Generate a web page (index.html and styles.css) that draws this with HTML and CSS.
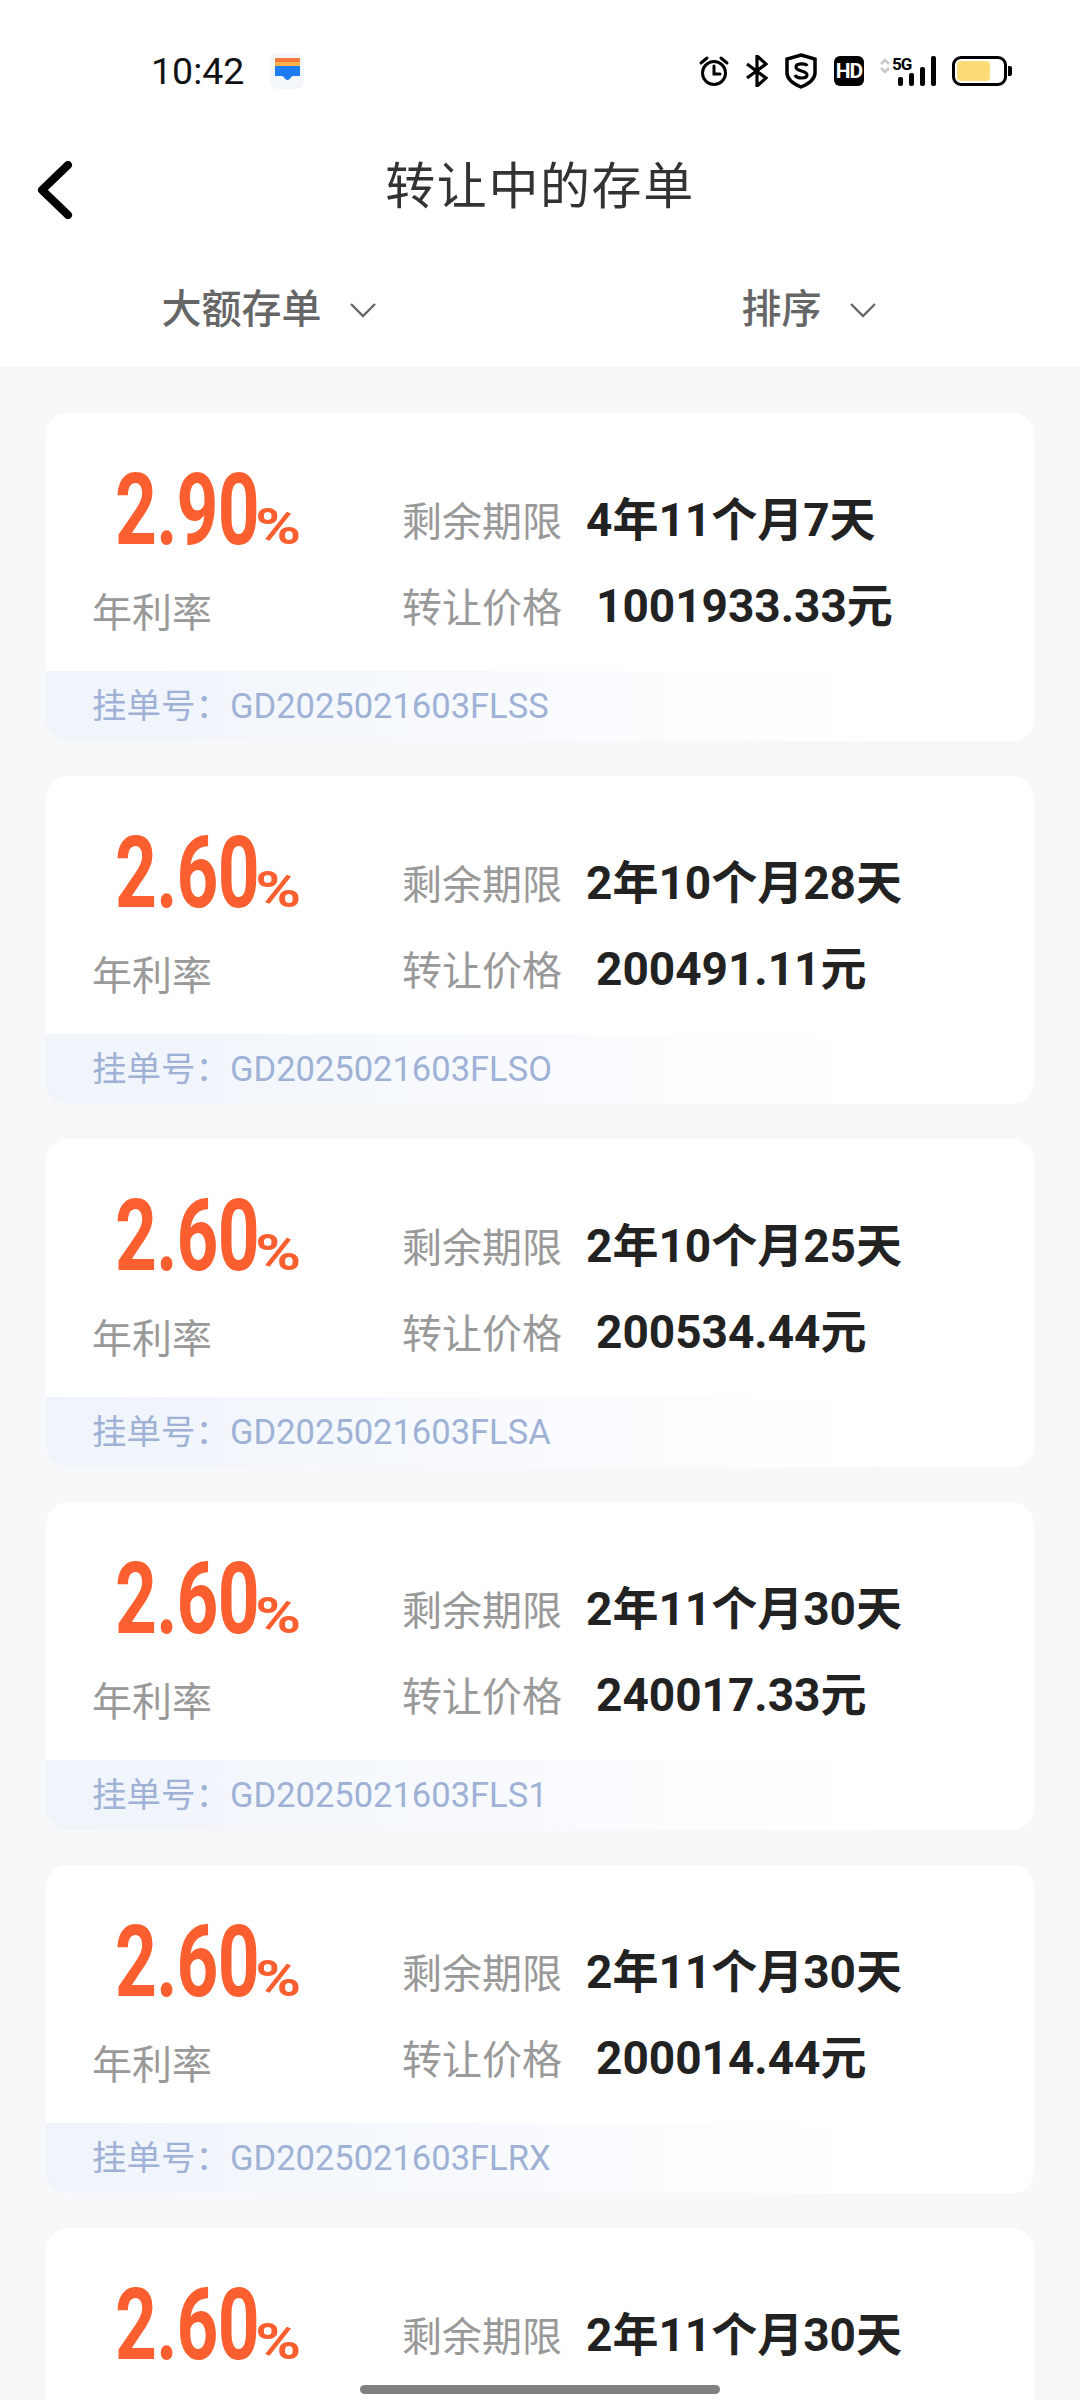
FILE: index.html
```html
<!doctype html>
<html lang="zh-CN">
  <head>
    <meta name="viewport" content="width=device-width, initial-scale=1.0" />
    <meta http-equiv="Content-Type" content="text/html; charset=utf-8" />
    <title>转让中的存单</title>
    <link rel="stylesheet" href="styles.css">
  </head>
  <body>
    <div id="page">
      <div id="header">
        <div id="statusbar">
          <span id="clock">10:42</span>
          <svg id="app-icon" width="34" height="36" viewBox="0 0 34 36">
            <rect width="34" height="36" rx="7" fill="#f3f7fc"/>
            <rect x="5" y="5" width="25" height="4" fill="#f4793a"/>
            <rect x="5" y="9" width="25" height="4" fill="#fbb24a"/>
            <path d="M5 13h25v10h-7c-2 0-3 4-5.500 4s-3.500-4-5.500-4H5z" fill="#1c7cf0"/>
          </svg>
          <div id="status-icons">
            <svg width="32" height="32" viewBox="0 0 32 32" fill="none" stroke="#000" stroke-width="3">
              <circle cx="16" cy="18" r="11.500"/>
              <path d="M16 11v8h6M3 8l6-5M29 8l-6-5" stroke-linecap="round"/>
            </svg>
            <svg width="22" height="32" viewBox="0 0 22 32" fill="none" stroke="#000" stroke-width="3.200">
              <path d="M1 9l19 14-9 8V1l9 8L1 23"/>
            </svg>
            <svg width="34" height="36" viewBox="0 0 34 36" fill="none" stroke="#000">
              <path d="M17 2l14 4v14c0 7-7 11-14 14C10 31 3 27 3 20V6z" stroke-width="3.500"/>
              <path d="M23 13c-1-3-11-3-11 1 0 5 11 3 11 8 0 4-10 4-12 0" stroke-width="3.200"/>
            </svg>
            <span id="hd">HD</span>
            <div id="signal">
              <svg width="10" height="16" viewBox="0 0 10 16" fill="none" stroke="#c8c8c8" stroke-width="2.500">
                <path d="M1 6l4-4 4 4M1 10l4 4 4-4"/>
              </svg>
              <span id="net">5G</span>
              <div id="bars">
                <i class="bar bar1"></i><i class="bar bar2"></i><i class="bar bar3"></i><i class="bar bar4"></i>
              </div>
            </div>
            <div id="battery"><div id="battery-level"></div></div>
          </div>
        </div>

        <div id="titlebar">
          <svg id="back" width="36" height="58" viewBox="0 0 36 58" fill="none" stroke="#000" stroke-width="8" stroke-linecap="round" stroke-linejoin="round">
            <path d="M31 4L5 29l26 25"/>
          </svg>
          <h1>转让中的存单</h1>
        </div>

        <div id="filters">
          <div class="filter">
            <span>大额存单</span>
            <svg width="26" height="16" viewBox="0 0 26 16" fill="none" stroke="#666" stroke-width="2.400"><path d="M1 2l12 12L25 2"/></svg>
          </div>
          <div class="filter">
            <span>排序</span>
            <svg width="26" height="16" viewBox="0 0 26 16" fill="none" stroke="#666" stroke-width="2.400"><path d="M1 2l12 12L25 2"/></svg>
          </div>
        </div>
      </div>

      <div id="list">
        <div class="card">
          <div class="card-main">
            <div class="rate-col">
              <div class="rate">2.90<small>%</small></div>
              <div class="rate-label">年利率</div>
            </div>
            <div class="info-col">
              <div class="info-row"><span class="label">剩余期限</span><span class="value">4年11个月7天</span></div>
              <div class="info-row"><span class="label">转让价格</span><span class="value price">1001933.33元</span></div>
            </div>
          </div>
          <div class="card-foot">挂单号：<span class="order">GD2025021603FLSS</span></div>
        </div>

        <div class="card">
          <div class="card-main">
            <div class="rate-col">
              <div class="rate">2.60<small>%</small></div>
              <div class="rate-label">年利率</div>
            </div>
            <div class="info-col">
              <div class="info-row"><span class="label">剩余期限</span><span class="value">2年10个月28天</span></div>
              <div class="info-row"><span class="label">转让价格</span><span class="value price">200491.11元</span></div>
            </div>
          </div>
          <div class="card-foot">挂单号：<span class="order">GD2025021603FLSO</span></div>
        </div>

        <div class="card">
          <div class="card-main">
            <div class="rate-col">
              <div class="rate">2.60<small>%</small></div>
              <div class="rate-label">年利率</div>
            </div>
            <div class="info-col">
              <div class="info-row"><span class="label">剩余期限</span><span class="value">2年10个月25天</span></div>
              <div class="info-row"><span class="label">转让价格</span><span class="value price">200534.44元</span></div>
            </div>
          </div>
          <div class="card-foot">挂单号：<span class="order">GD2025021603FLSA</span></div>
        </div>

        <div class="card">
          <div class="card-main">
            <div class="rate-col">
              <div class="rate">2.60<small>%</small></div>
              <div class="rate-label">年利率</div>
            </div>
            <div class="info-col">
              <div class="info-row"><span class="label">剩余期限</span><span class="value">2年11个月30天</span></div>
              <div class="info-row"><span class="label">转让价格</span><span class="value price">240017.33元</span></div>
            </div>
          </div>
          <div class="card-foot">挂单号：<span class="order">GD2025021603FLS1</span></div>
        </div>

        <div class="card">
          <div class="card-main">
            <div class="rate-col">
              <div class="rate">2.60<small>%</small></div>
              <div class="rate-label">年利率</div>
            </div>
            <div class="info-col">
              <div class="info-row"><span class="label">剩余期限</span><span class="value">2年11个月30天</span></div>
              <div class="info-row"><span class="label">转让价格</span><span class="value price">200014.44元</span></div>
            </div>
          </div>
          <div class="card-foot">挂单号：<span class="order">GD2025021603FLRX</span></div>
        </div>

        <div class="card">
          <div class="card-main">
            <div class="rate-col">
              <div class="rate">2.60<small>%</small></div>
            </div>
            <div class="info-col">
              <div class="info-row"><span class="label">剩余期限</span><span class="value">2年11个月30天</span></div>
            </div>
          </div>
        </div>
      </div>

      <div id="home-bar"></div>
    </div>
  </body>
</html>
```

FILE: styles.css
```css
/* body tags */
body {
    margin: 0;
    font-family: Roboto, "Noto Sans CJK SC", sans-serif;
}
h1 {
    margin: 0;
    color: #333;
    font-size: 50px;
    font-weight: 400;
    letter-spacing: 1.6px;
    line-height: 60px;
    padding-top: 4px;
}
/* ids */
#page {
    background: #f6f8fa;
    height: 2400px;
    overflow: hidden;
    position: relative;
    width: 1080px;
}
#header {
    background: #fff;
    height: 367px;
}
#statusbar {
    align-items: center;
    display: flex;
    height: 142px;
    padding: 0 73px 0 151px;
}
#clock {
    color: #111;
    font-size: 37.5px;
}
#app-icon { margin-left: 26px; }
#status-icons {
    align-items: center;
    display: flex;
    gap: 16px;
    margin-left: auto;
}
#hd {
    background: #000;
    border-radius: 6px;
    color: #fff;
    font-size: 21px;
    font-weight: 700;
    height: 30px;
    letter-spacing: -1px;
    line-height: 30px;
    text-align: center;
    width: 30px;
}
#signal {
    align-items: flex-end;
    display: flex;
    height: 30px;
    position: relative;
    width: 56px;
}
#signal svg {
    left: 0;
    position: absolute;
    top: 2px;
}
#net {
    font-size: 17px;
    font-weight: 700;
    left: 12px;
    letter-spacing: -1px;
    line-height: 16px;
    position: absolute;
    top: 0;
}
#bars {
    align-items: flex-end;
    bottom: 0;
    display: flex;
    gap: 6px;
    position: absolute;
    right: 0;
}
.bar {
    background: #000;
    border-radius: 2px;
    display: block;
    width: 5px;
}
.bar1 { height: 9px; }
.bar2 { height: 13px; }
.bar3 { height: 19px; }
.bar4 { height: 30px; }
#battery {
    border: 3px solid #000;
    border-radius: 9px;
    box-sizing: border-box;
    height: 30px;
    padding: 2px;
    position: relative;
    width: 55px;
}
#battery::after {
    background: #000;
    border-radius: 0 2px 2px 0;
    content: "";
    height: 10px;
    left: 53px;
    position: absolute;
    top: 7px;
    width: 4px;
}
#battery-level {
    background: #fddc77;
    border-radius: 4px;
    height: 100%;
    width: 33px;
}
#titlebar {
    align-items: center;
    display: grid;
    grid-template-columns: 1fr auto 1fr;
    height: 86px;
    padding-left: 37px;
    padding-right: 37px;
}
#back { margin-top: 10px; }
#filters {
    display: flex;
    padding-top: 56px;
}
#list {
    display: flex;
    flex-direction: column;
    gap: 35px;
    padding: 46px 46px 0;
}
#home-bar {
    background: #808080;
    border-radius: 5px;
    bottom: 6px;
    height: 9px;
    left: 360px;
    position: absolute;
    width: 360px;
}
/* classes */
.filter {
    align-items: center;
    color: #666;
    display: flex;
    flex: 1;
    font-size: 40px;
    font-weight: 500;
    gap: 28px;
    justify-content: center;
    line-height: 52px;
    padding-right: 3px;
}
.card {
    background: #fff;
    border-radius: 22px;
    flex: none;
    height: 328px;
    overflow: hidden;
}
.card-main {
    display: flex;
    height: 258px;
}
.rate-col {
    padding-left: 46px;
    padding-top: 47px;
    width: 310px;
}
/* no condensed face installed, so the rate is squeezed from Roboto */
.rate {
    color: #fb5f2f;
    font-size: 100px;
    font-weight: 700;
    letter-spacing: -1px;
    line-height: 100px;
    margin-left: 23px;
    transform: scaleX(0.73);
    transform-origin: left;
    white-space: nowrap;
}
.rate small {
    display: inline-block;
    font-size: 50px;
    letter-spacing: 0;
    margin-left: -5px;
    transform: scaleX(1.7);
    transform-origin: left;
}
.rate-label {
    color: #999;
    font-size: 40px;
    line-height: 52px;
    margin-top: 11px;
}
.info-col {
    display: flex;
    flex-direction: column;
    gap: 30px;
    padding-top: 78px;
}
.info-row {
    align-items: center;
    display: flex;
    height: 56px;
}
.label {
    color: #999;
    font-size: 40px;
    width: 184px;
}
.value {
    color: #222;
    font-size: 46px;
    font-weight: 700;
    margin-bottom: 6px;
}
.price { margin-left: 10px; }
.card-foot {
    background: linear-gradient(to right, #eff4fb, #fff 85%);
    color: #9fb2d6;
    font-size: 34.5px;
    height: 70px;
    line-height: 70px;
    padding-left: 46px;
}
```
